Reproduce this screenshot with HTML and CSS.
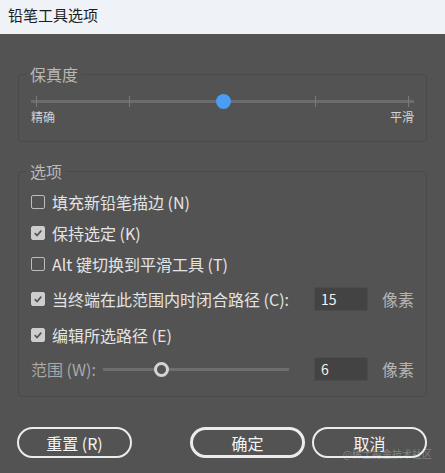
FILE: index.html
```html
<!DOCTYPE html>
<html lang="zh">

<head>
    <meta charset="UTF-8">
    <meta name="viewport" content="width=device-width, initial-scale=1.0">
    <title>铅笔工具选项</title>
    <link rel="stylesheet" href="styles.css">
</head>

<body>

    <div class="titleBar">铅笔工具选项</div>

    <div class="dialog">
        <!-- 保真度 -->
        <fieldset class="group fidelity">
            <legend>保真度</legend>
            <div class="slider">
                <div class="track"></div>
                <div class="ticks">
                    <span></span><span></span><span class="hidden"></span><span></span><span></span>
                </div>
                <div class="knob" style="left: 50%;"></div>
            </div>
            <div class="ends">
                <span>精确</span>
                <span>平滑</span>
            </div>
        </fieldset>

        <!-- 选项 -->
        <fieldset class="group options">
            <legend>选项</legend>
            <div class="row">
                <span class="check"></span>
                <span class="label">填充新铅笔描边 (N)</span>
            </div>
            <div class="row">
                <span class="check on"><svg viewBox="0 0 14 14"><path d="M3.2 7.2 L5.9 9.9 L10.8 4.3" /></svg></span>
                <span class="label">保持选定 (K)</span>
            </div>
            <div class="row">
                <span class="check"></span>
                <span class="label">Alt 键切换到平滑工具 (T)</span>
            </div>
            <div class="row tall first">
                <span class="check on"><svg viewBox="0 0 14 14"><path d="M3.2 7.2 L5.9 9.9 L10.8 4.3" /></svg></span>
                <span class="label">当终端在此范围内时闭合路径 (C):</span>
                <span class="field">15</span>
                <span class="unit">像素</span>
            </div>
            <div class="row tall">
                <span class="check on"><svg viewBox="0 0 14 14"><path d="M3.2 7.2 L5.9 9.9 L10.8 4.3" /></svg></span>
                <span class="label">编辑所选路径 (E)</span>
            </div>
            <div class="row range">
                <span class="label dim">范围 (W):</span>
                <div class="miniSlider">
                    <div class="miniTrack"></div>
                    <div class="ring" style="left: 31%;"></div>
                </div>
                <span class="field">6</span>
                <span class="unit">像素</span>
            </div>
        </fieldset>

        <div class="buttons">
            <button class="btn">重置 (R)</button>
            <button class="btn primary">确定</button>
            <button class="btn">取消</button>
        </div>
        <div class="mark">@稀土掘金技术社区</div>
    </div>

</body>

</html>
```

FILE: styles.css
```css
* {margin: 0; padding: 0; box-sizing: border-box;}
body {width: 445px; height: 473px; overflow: hidden; background: #535353; font-family: "Noto Sans CJK SC", "Noto Sans", sans-serif; color: #e2e2e2;}

.titleBar {height: 34px; line-height: 30px; padding-left: 8px; background: #eff2f6; color: #1c1c1c; font-size: 15px;}

.dialog {position: relative; padding: 30px 18px 0; height: 439px;}

.group {border: 1px solid #4a4a4a; border-radius: 4px; padding: 0 12px;}
.group legend {margin-left: -5px; padding: 0 4px; height: 20px; line-height: 20px; font-size: 16px; color: #b9b9b9;}

.fidelity {padding-top: 9px; padding-bottom: 17px;}
.slider {position: relative; height: 16px;}
.track {position: absolute; left: 0; right: 0; top: 7px; height: 3px; background: #6c6c6c;}
.ticks {display: flex; justify-content: space-between; padding: 0 5px; height: 16px; align-items: center;}
.ticks span {width: 1px; height: 11px; background: #7a7a7a; position: relative;}
.ticks span.hidden {visibility: hidden;}
.knob {position: absolute; top: 1px; width: 15px; height: 15px; margin-left: -7px; border-radius: 50%; background: #4a9df2;}
.ends {display: flex; justify-content: space-between; height: 14px; line-height: 14px; margin-top: 1px; font-size: 12px; color: #d2d2d2;}

.options {margin-top: 19px; padding-top: 5px; padding-bottom: 11px;}
.row {display: flex; align-items: center; height: 31px; font-size: 16px;}
.row.tall {height: 36px;}
.row.first {margin-top: 2px;}
.row.range {height: 32px;}
.check {width: 14px; height: 14px; border: 1px solid #bcbcbc; border-radius: 2px; margin-right: 7px; flex: none;}
.check.on {background: #cdcdcd; border-color: #cdcdcd;}
.check svg {display: block; width: 12px; height: 12px;}
.check path {fill: none; stroke: #555; stroke-width: 2;}
.label {white-space: nowrap; color: #e4e4e4;}
.label.dim {color: #a9a9a9;}

.field {margin-left: auto; width: 54px; height: 24px; line-height: 22px; padding-left: 6px; background: #434343; border: 1px solid #4c4c4c; border-radius: 2px; color: #f2f2f2; font-size: 14px;}
.unit {margin-left: 14px; color: #b4b4b4; font-size: 16px;}

.miniSlider {position: relative; width: 186px; height: 16px; margin-left: 7px;}
.miniTrack {height: 3px; margin-top: 7px; background: #6e6e6e;}
.ring {position: absolute; top: 1px; width: 15px; height: 15px; margin-left: -7px; border-radius: 50%; border: 3px solid #d4d4d4; background: #535353;}

.buttons {display: flex; margin-top: 30px; margin-left: -1px; gap: 7px;}
.btn {width: 115px; height: 31px; border: 2px solid #ececec; border-radius: 16px; background: transparent; color: #f4f4f4; font-family: inherit; font-size: 16px;}
.btn.primary {margin-left: auto; border-width: 3px;}

.mark {position: absolute; right: 13px; bottom: 12px; font-size: 10px; color: rgba(255, 255, 255, 0.28);}
```
